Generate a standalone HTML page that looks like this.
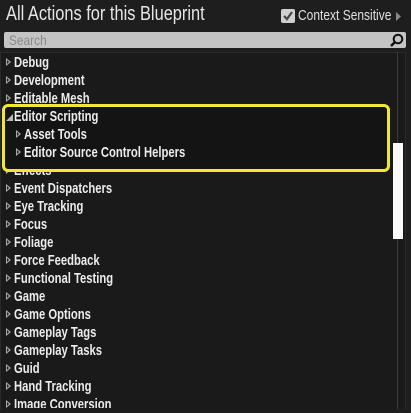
<!DOCTYPE html>
<html><head><style>
body{margin:0;width:411px;height:413px;background:#1e1e1e;overflow:hidden;font-family:"Liberation Sans",sans-serif;position:relative}
.title{position:absolute;left:6px;top:3px;color:#e6e6e6;font-size:20px;transform:scaleX(0.82);transform-origin:left;white-space:nowrap}
.cs{position:absolute;left:298px;top:7px;color:#e0e0e0;font-size:15px;transform:scaleX(0.8);transform-origin:left;white-space:nowrap}
.cb{position:absolute;left:281px;top:9px;width:14px;height:14px;background:#cfcfcf;border-radius:2px}
.search{position:absolute;left:4px;top:32px;width:402px;height:16px;background:#c4c4c4;border-radius:2px}
.search span{position:absolute;left:5px;top:0px;color:#8a8a8a;font-size:14px;transform:scaleX(0.85);transform-origin:left}
.list{position:absolute;left:0;top:52px;width:404px;height:357px;background:#1a1a1a;border:1px solid #2a2a2a;overflow:hidden}
.row{position:absolute;left:6px;height:18px;color:#ececec;font-weight:bold;font-size:15px;line-height:18px;white-space:nowrap}
.row b{display:inline-block;transform:scaleX(0.75);transform-origin:left;font-weight:bold}
.row i{display:inline-block;width:0;height:0;border-left:5px solid transparent;border-top:4px solid transparent;border-bottom:4px solid transparent;position:relative;margin-right:3px;top:-1px}
.row i:before{content:"";position:absolute;left:-5px;top:-4px;width:0;height:0;border-left:5px solid #aaa;border-top:4px solid transparent;border-bottom:4px solid transparent}
.row i:after{content:"";position:absolute;left:-4px;top:-2px;width:0;height:0;border-left:2.5px solid #1a1a1a;border-top:2px solid transparent;border-bottom:2px solid transparent}
.hl{position:absolute;left:2px;top:104px;width:382px;height:62px;border:3px solid #f2e830;border-radius:6px;background:#141414}
.track{position:absolute;left:397px;top:52px;width:1px;height:357px;background:#3a3a3a}
.thumb{position:absolute;left:393px;top:143px;width:10px;height:96px;background:#fafafa}
</style></head><body>
<div class="title">All Actions for this Blueprint</div>
<div class="cb"><svg width="14" height="14"><path d="M3 7 L6 10 L11 3" stroke="#444" stroke-width="2.2" fill="none"/></svg></div>
<div class="cs">Context Sensitive</div>
<svg style="position:absolute;left:396px;top:12px" width="6" height="9"><path d="M0 0 L5 4.5 L0 9Z" fill="#888"/></svg>
<div class="search"><span>Search</span>
<svg style="position:absolute;left:386px;top:1px" width="14" height="14"><circle cx="8" cy="6" r="4.3" stroke="#111" stroke-width="2" fill="none"/><path d="M5 9 L1 13" stroke="#111" stroke-width="2.5"/></svg></div>
<div class="list"></div>
<div class="track"></div>
<div class="thumb"></div>
<div class="row" style="top:54px"><i></i><b>Debug</b></div>
<div class="row" style="top:72px"><i></i><b>Development</b></div>
<div class="row" style="top:90px"><i></i><b>Editable Mesh</b></div>
<div class="row" style="top:162px"><i></i><b>Effects</b></div>
<div class="hl"></div>
<div class="row" style="top:108px"><svg width="7" height="7" style="margin-right:1px"><path d="M7 0 L7 7 L0 7Z" fill="#bbb"/></svg><b>Editor Scripting</b></div>
<div class="row" style="top:126px;left:16px"><i></i><b>Asset Tools</b></div>
<div class="row" style="top:144px;left:16px"><i></i><b>Editor Source Control Helpers</b></div>
<div class="row" style="top:180px"><i></i><b>Event Dispatchers</b></div>
<div class="row" style="top:198px"><i></i><b>Eye Tracking</b></div>
<div class="row" style="top:216px"><i></i><b>Focus</b></div>
<div class="row" style="top:234px"><i></i><b>Foliage</b></div>
<div class="row" style="top:252px"><i></i><b>Force Feedback</b></div>
<div class="row" style="top:270px"><i></i><b>Functional Testing</b></div>
<div class="row" style="top:288px"><i></i><b>Game</b></div>
<div class="row" style="top:306px"><i></i><b>Game Options</b></div>
<div class="row" style="top:324px"><i></i><b>Gameplay Tags</b></div>
<div class="row" style="top:342px"><i></i><b>Gameplay Tasks</b></div>
<div class="row" style="top:360px"><i></i><b>Guid</b></div>
<div class="row" style="top:378px"><i></i><b>Hand Tracking</b></div>
<div class="row" style="top:396px;height:12px;overflow:hidden"><i></i><b>Image Conversion</b></div>
<div style="position:absolute;left:0;top:409px;width:411px;height:4px;background:#1e1e1e"></div>
</body></html>
